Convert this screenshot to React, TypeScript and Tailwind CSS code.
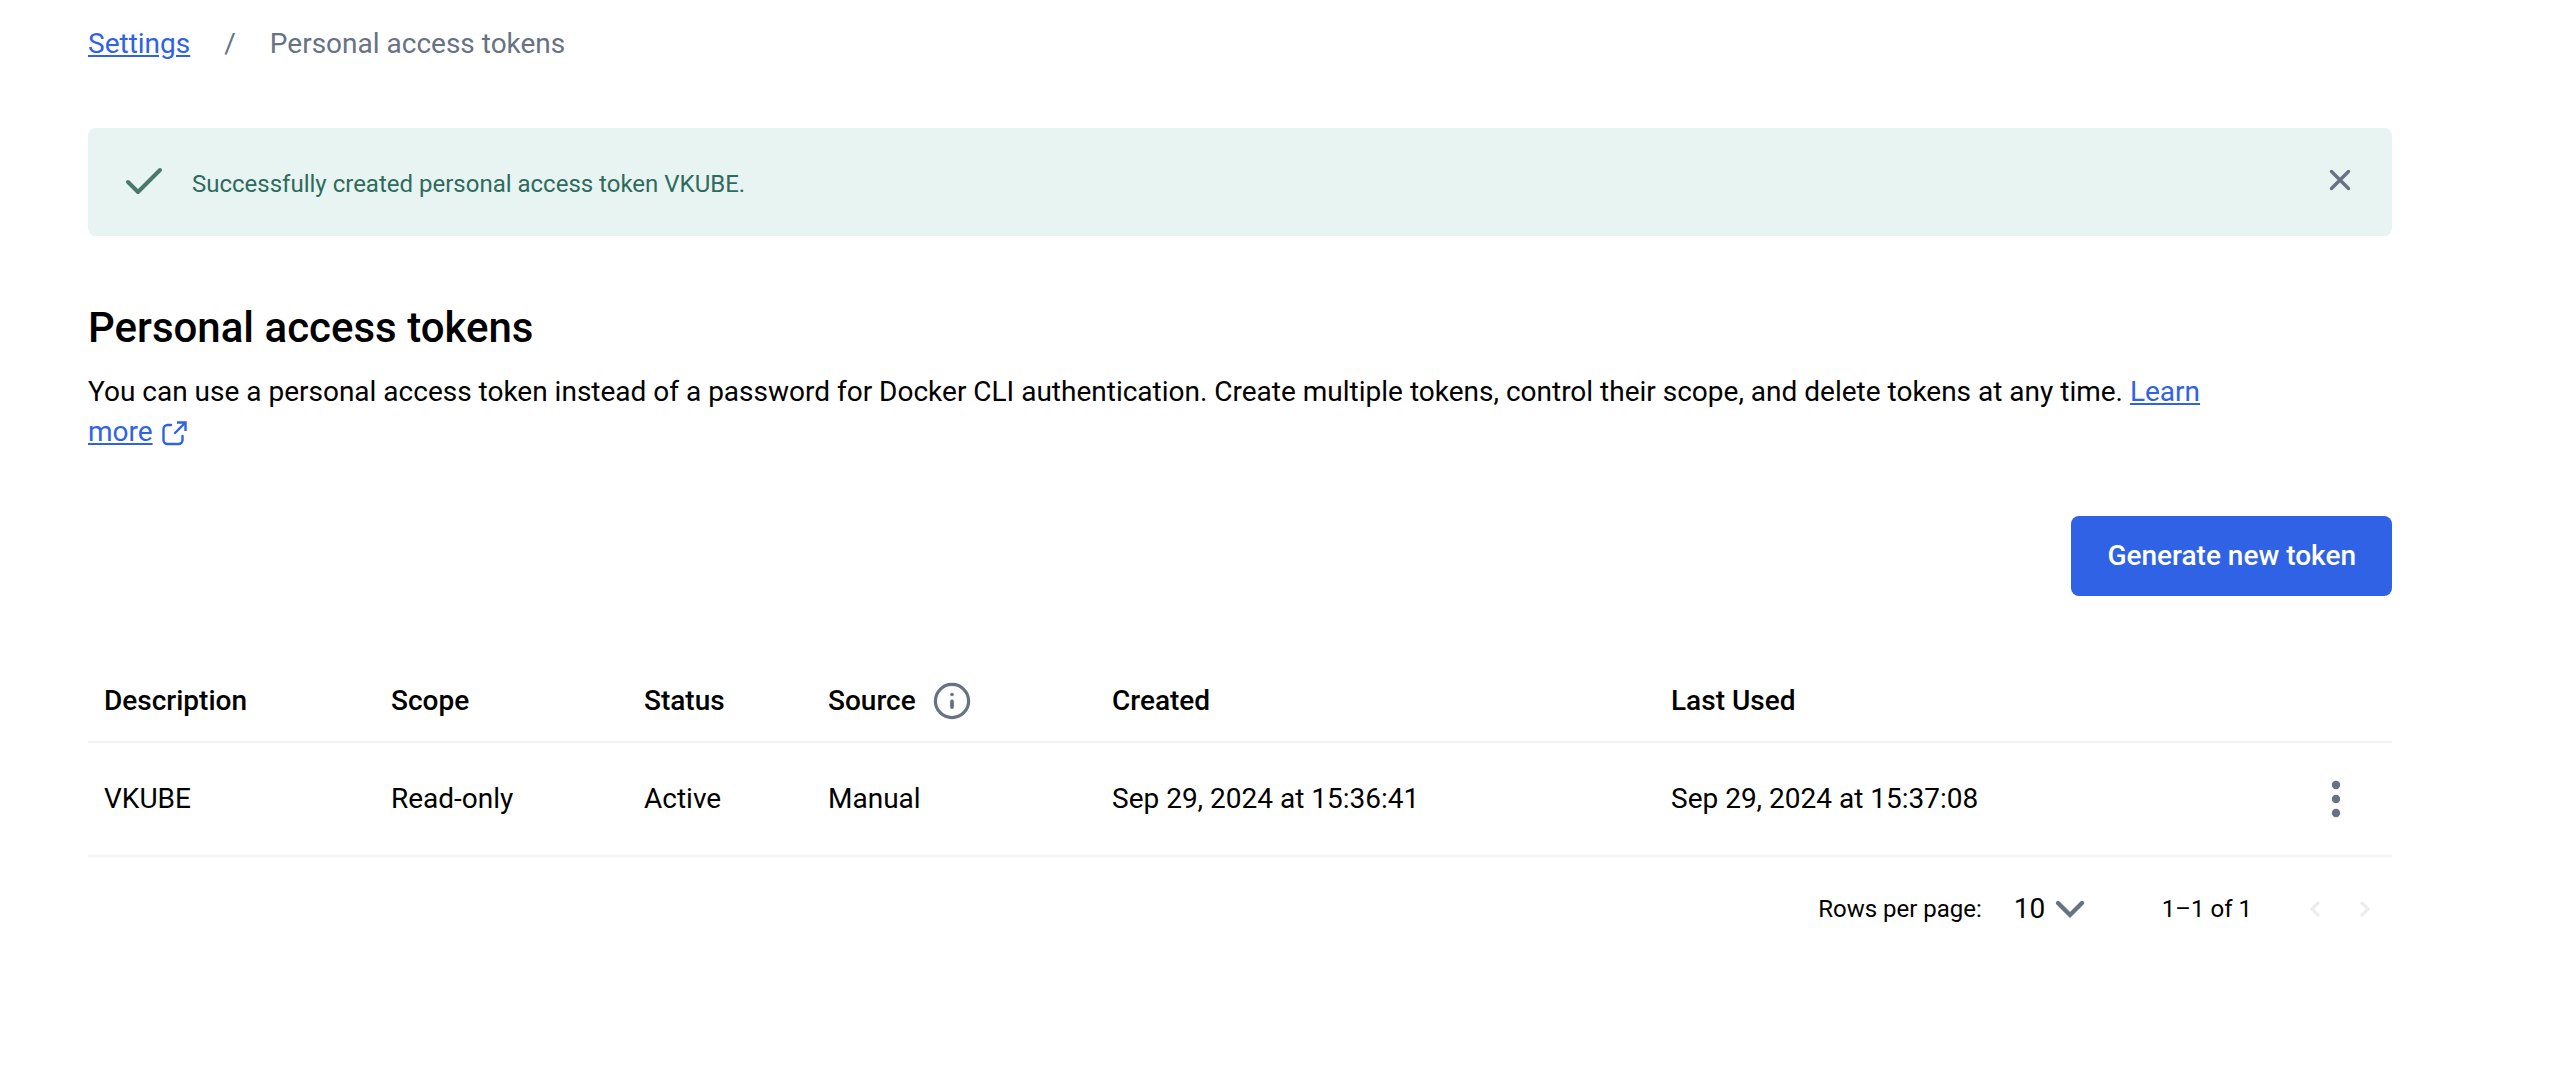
import React from "react";

const columns = [
  { label: "Description", width: "w-[287px]" },
  { label: "Scope", width: "w-[253px]" },
  { label: "Status", width: "w-[184px]" },
  { label: "Source", width: "w-[284px]", info: true },
  { label: "Created", width: "w-[559px]" },
  { label: "Last Used", width: "" },
];

const tokens = [
  {
    description: "VKUBE",
    scope: "Read-only",
    status: "Active",
    source: "Manual",
    created: "Sep 29, 2024 at 15:36:41",
    lastUsed: "Sep 29, 2024 at 15:37:08",
  },
];

const CheckIcon = () => (
  <svg className="size-12" viewBox="0 0 48 48" fill="none" stroke="#47796c" strokeWidth="4" strokeLinecap="round" strokeLinejoin="round">
    <path d="M8 26l10 10L40 14" />
  </svg>
);

const CloseIcon = () => (
  <svg className="size-10" viewBox="0 0 40 40" fill="none" stroke="#677285" strokeWidth="3.400" strokeLinecap="round">
    <path d="M11.500 11.500l17 17M28.500 11.500l-17 17" />
  </svg>
);

const ExternalIcon = () => (
  <svg className="inline size-7" viewBox="0 0 28 28" fill="none" stroke="#3062e6" strokeWidth="2.400" strokeLinecap="round">
    <path d="M11 5H7.500a4 4 0 0 0-4 4v11a4 4 0 0 0 4 4h11a4 4 0 0 0 4-4v-4" />
    <path d="M15 13l10-10" />
    <path d="M17 2.500h8.500V11" strokeLinecap="butt" />
  </svg>
);

const InfoIcon = () => (
  <svg className="size-10" viewBox="0 0 40 40" fill="none" stroke="#677285" strokeLinecap="round">
    <circle cx="20" cy="20" r="16.600" strokeWidth="3.200" />
    <path d="M20 20.500v5.500" strokeWidth="3.800" />
    <circle cx="20" cy="13.500" r="1.800" fill="#677285" stroke="none" />
  </svg>
);

const App = () => {
  return (
    <main className="bg-white pt-6 pr-42 pb-16 pl-22 font-[Roboto,sans-serif] text-[28px] leading-10 text-black">
      {/* breadcrumbs */}
      <nav aria-label="Breadcrumb">
        <ol className="flex items-center gap-[34px] text-[#677285]">
          <li>
            <a href="#" className="text-[#3062e6] underline">
              Settings
            </a>
          </li>
          <li aria-hidden="true">/</li>
          <li>Personal access tokens</li>
        </ol>
      </nav>

      {/* success alert */}
      <div role="status" className="mt-16 flex items-start rounded-lg bg-[#e8f4f2] px-8 pt-7 pb-8">
        <CheckIcon />
        <p className="mt-2 ml-6 grow text-2xl leading-10 text-[#2e6b5c]">
          Successfully created personal access token VKUBE.
        </p>
        <button type="button" aria-label="Close" className="mt-1">
          <CloseIcon />
        </button>
      </div>

      {/* heading */}
      <h1 className="mt-16 text-[42px] leading-14 font-medium">Personal access tokens</h1>
      <p className="mt-4 pr-36">
        You can use a personal access token instead of a password for Docker CLI authentication. Create multiple tokens,
        control their scope, and delete tokens at any time.{" "}
        <a href="#" className="text-[#3062e6]">
          <span className="underline">Learn more</span> <ExternalIcon />
        </a>
      </p>

      <div className="mt-16 flex justify-end">
        <button type="button" className="rounded-lg bg-[#3062e6] px-9 py-5 font-medium text-white">
          Generate new token
        </button>
      </div>

      {/* tokens table */}
      <table className="mt-16 w-full table-fixed text-left">
        <thead>
          <tr className="h-[82px] border-b-2 border-[#f3f3f4]">
            {columns.map((col) => (
              <th key={col.label} className={`${col.width} px-4 font-medium`}>
                <div className="flex items-center gap-4">
                  {col.label}
                  {col.info && <InfoIcon />}
                </div>
              </th>
            ))}
            <th className="w-28"></th>
          </tr>
        </thead>
        <tbody>
          {tokens.map((token) => (
            <tr key={token.description} className="h-[114px] border-b-2 border-[#f3f3f4]">
              <td className="px-4">{token.description}</td>
              <td className="px-4">{token.scope}</td>
              <td className="px-4">{token.status}</td>
              <td className="px-4">{token.source}</td>
              <td className="px-4">{token.created}</td>
              <td className="px-4">{token.lastUsed}</td>
              <td className="pr-9">
                <button type="button" aria-label="Token actions" className="ml-auto block">
                  <svg className="size-10" viewBox="0 0 40 40" fill="#677285">
                    <circle cx="20" cy="6" r="4.200" />
                    <circle cx="20" cy="20" r="4.200" />
                    <circle cx="20" cy="34" r="4.200" />
                  </svg>
                </button>
              </td>
            </tr>
          ))}
        </tbody>
      </table>

      {/* pagination */}
      <div className="mt-8 flex items-center justify-end pr-3 text-2xl leading-10">
        <label htmlFor="rows">Rows per page:</label>
        <div className="relative ml-8">
          <select id="rows" defaultValue="10" className="block w-19 appearance-none bg-transparent text-[28px] leading-10">
            <option>10</option>
            <option>25</option>
            <option>50</option>
          </select>
          <svg className="pointer-events-none absolute top-1 right-1 size-8" viewBox="0 0 32 32" fill="none" stroke="#677285" strokeWidth="4.400" strokeLinecap="round">
            <path d="M4 10l12 12L28 10" />
          </svg>
        </div>
        <p className="ml-18">1–1 of 1</p>
        <button type="button" aria-label="Previous page" disabled className="ml-12">
          <svg className="size-8" viewBox="0 0 32 32" fill="none" stroke="#ececed" strokeWidth="3">
            <path d="M19 9l-7 7 7 7" />
          </svg>
        </button>
        <button type="button" aria-label="Next page" disabled className="ml-4">
          <svg className="size-8" viewBox="0 0 32 32" fill="none" stroke="#ececed" strokeWidth="3">
            <path d="M13 9l7 7-7 7" />
          </svg>
        </button>
      </div>
    </main>
  );
};

export default App;
